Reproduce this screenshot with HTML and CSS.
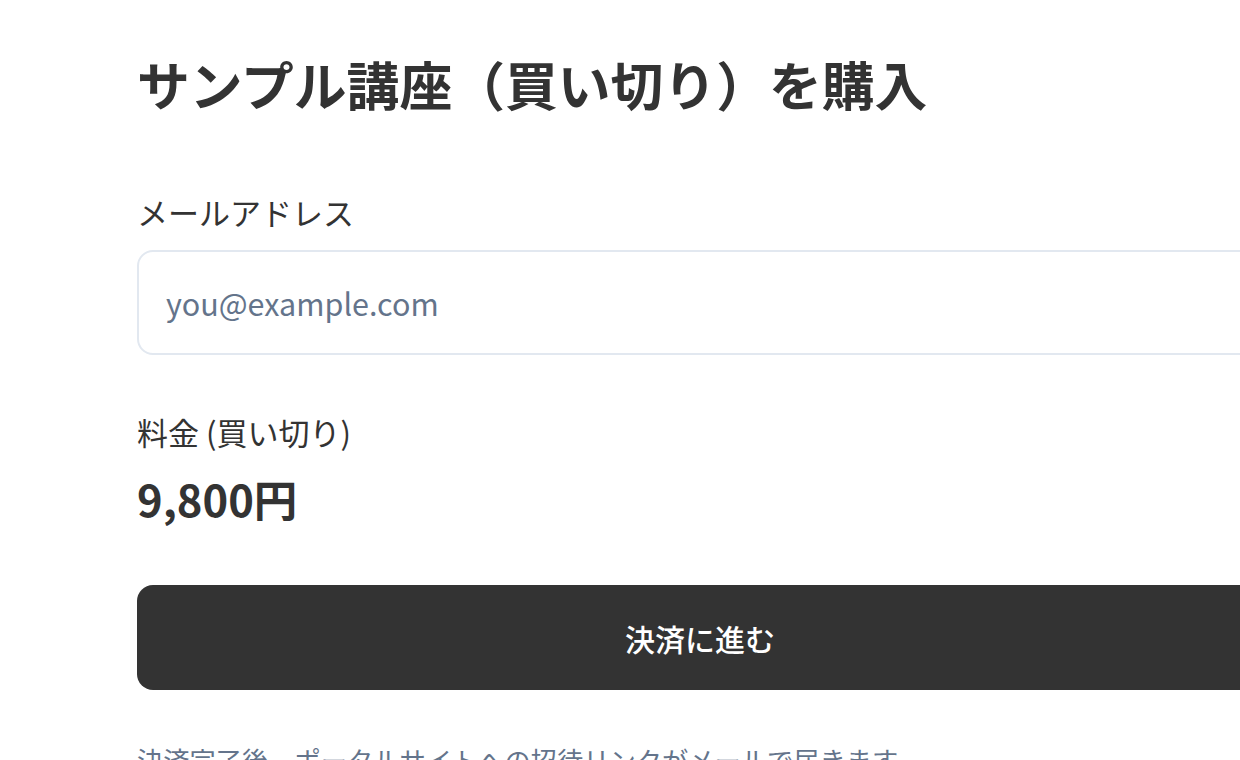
FILE: index.html
```html
<!DOCTYPE html>
<html lang="ja">
<head>
<meta charset="utf-8">
<title>サンプル講座（買い切り）を購入</title>
<link rel="stylesheet" href="styles.css">
</head>
<body>
<main class="page">
  <h1 class="title">サンプル講座（買い切り）を購入</h1>
  <form class="form">
    <label class="label" for="email">メールアドレス</label>
    <input class="input" id="email" type="email" placeholder="you@example.com">
    <div class="label price-label">料金 (買い切り)</div>
    <div class="price">9,800円</div>
    <button class="button" type="button">決済に進む</button>
    <p class="note">決済完了後、ポータルサイトへの招待リンクがメールで届きます。</p>
  </form>
</main>
</body>
</html>
```

FILE: styles.css
```css
html, body {
  margin: 0;
  padding: 0;
  background: #ffffff;
  overflow: hidden;
}
body {
  font-family: "Noto Sans CJK JP", "Noto Sans", sans-serif;
  color: #333333;
}
.page {
  width: 1126px;
  padding: 52px 0 0 137px;
}
.title {
  margin: 0;
  font-size: 52.8px;
  line-height: 63px;
  font-weight: 700;
  color: #333333;
}
.form {
  display: flex;
  flex-direction: column;
  margin-top: 74px;
}
.label {
  display: block;
  font-size: 31px;
  line-height: 45px;
  color: #333333;
}
.input {
  margin-top: 16px;
  box-sizing: border-box;
  height: 105px;
  width: 100%;
  border: 2px solid #e2e8f0;
  border-radius: 16px;
  padding: 0 27px;
  font-family: inherit;
  font-size: 30.5px;
  color: #333333;
  background: #ffffff;
  outline: none;
}
.input::placeholder {
  color: #64748b;
}
.price-label {
  margin-top: 54px;
}
.price {
  margin-top: 15px;
  font-size: 43.5px;
  line-height: 60px;
  font-weight: 700;
  color: #333333;
}
.button {
  margin-top: 56px;
  height: 105px;
  width: 100%;
  border: none;
  border-radius: 16px;
  background: #333333;
  color: #ffffff;
  font-family: inherit;
  font-size: 30px;
  font-weight: 500;
  cursor: pointer;
}
.note {
  margin: 50px 0 0;
  font-size: 26.25px;
  line-height: 40px;
  color: #64748b;
}
```
